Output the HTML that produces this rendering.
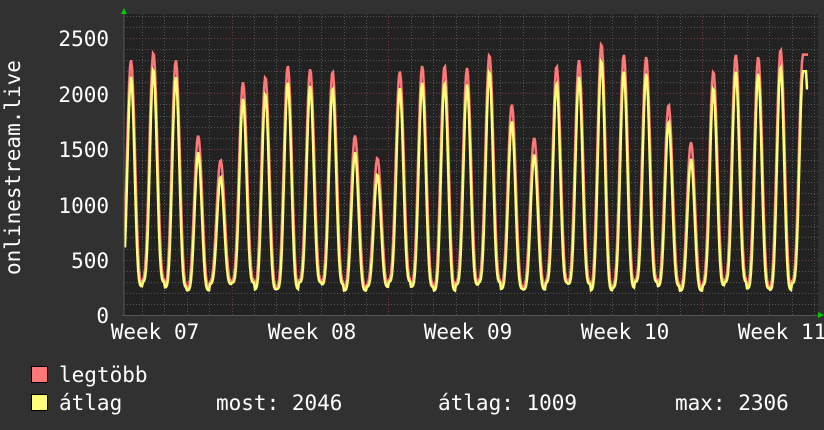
<!DOCTYPE html>
<html><head><meta charset="utf-8"><style>
html,body{margin:0;padding:0;background:#313131;width:824px;height:430px;overflow:hidden}
svg{display:block}
text{font-family:"DejaVu Sans Mono","Liberation Mono",monospace;fill:#fff}
</style></head><body>
<svg id="g" width="824" height="430" xmlns="http://www.w3.org/2000/svg">
<rect x="0" y="0" width="824" height="430" fill="#313131"/>
<rect x="124" y="14" width="694" height="301" fill="#222"/>
<g id="grid"></g>
<path id="mx" fill="none" stroke="#ff7777" stroke-width="2.5"/>
<path id="av" fill="none" stroke="#ffff77" stroke-width="2.5"/>
<line x1="124" y1="12" x2="124" y2="316" stroke="#555" stroke-width="1"/>
<line x1="122" y1="315.5" x2="818" y2="315.5" stroke="#555" stroke-width="1"/>
<polygon points="121,14 127,14 124,8" fill="#00cc00"/>
<polygon points="818,312 818,318 824,315" fill="#00cc00"/>
<g font-size="21" text-anchor="end">
<text x="109" y="46">2500</text>
<text x="109" y="102">2000</text>
<text x="109" y="157">1500</text>
<text x="109" y="213">1000</text>
<text x="109" y="268">500</text>
<text x="109" y="323">0</text>
</g>
<text font-size="21" transform="translate(20,275) rotate(-90)">onlinestream.live</text>
<g font-size="21" text-anchor="middle">
<text x="155" y="339">Week 07</text>
<text x="312" y="339">Week 08</text>
<text x="468" y="339">Week 09</text>
<text x="625" y="339">Week 10</text>
<text x="782" y="339">Week 11</text>
</g>
<rect x="31.5" y="366.5" width="16" height="16" fill="#ff7777" stroke="#000"/>
<rect x="31.5" y="394.5" width="16" height="16" fill="#ffff77" stroke="#000"/>
<g font-size="21">
<text x="59" y="382">legtöbb</text>
<text x="59" y="410">átlag</text>
<text x="216" y="410">most: 2046</text>
<text x="438" y="410">átlag: 1009</text>
<text x="675" y="410">max: 2306</text>
</g>
</svg>
<script>
var ns="http://www.w3.org/2000/svg",g=document.getElementById('grid');
function ln(x1,y1,x2,y2,c){var l=document.createElementNS(ns,'line');l.setAttribute('x1',x1);l.setAttribute('y1',y1);l.setAttribute('x2',x2);l.setAttribute('y2',y2);l.setAttribute('stroke',c);l.setAttribute('stroke-dasharray','1,2');g.appendChild(l);}
function Y(v){return 315-v*0.1108;}
for(var v=100;v<=2700;v+=100){var y=Math.round(Y(v))+.5;if(y<14)break;ln(124,y,818,y,v%500==0?'#7a3a3a':'#555');}
var d=22.4;for(var i=-6;i<30;i++){var x=231.5+i*d;if(x<126||x>818)continue;var xr=Math.round(x)+.5;ln(xr,14,xr,315,(i%7==0)?'#7a3a3a':'#555');}
var pk=[2300,2370,2300,1620,1400,2100,2150,2250,2220,2200,1620,1420,2200,2250,2250,2230,2350,1900,1600,2250,2300,2450,2350,2330,1900,1560,2200,2350,2330,2400,2350];
var mp="",ap="";
for(var x=125;x<=808;x+=1){
 var ph=(x-131)/d,k=Math.round(ph),f=ph-k;if(k<0)k=0;if(k>30){k=30;}
 if(x>803)f=0;
 var s=Math.pow((1+Math.cos(2*Math.PI*f))/2,1.6);
 var base=280+40*Math.sin(k*1.7);
 var m=base+(pk[k]-base)*s, a=base-20+(pk[k]-130-base)*Math.pow(s,1.3);
 if(x>=807){a=2046;}
 mp+=(x==125?"M":"L")+x+","+Y(m).toFixed(1);
 ap+=(x==125?"M":"L")+x+","+Y(a).toFixed(1);
}
document.getElementById('mx').setAttribute('d',mp);
document.getElementById('av').setAttribute('d',ap);
</script>
</body></html>
